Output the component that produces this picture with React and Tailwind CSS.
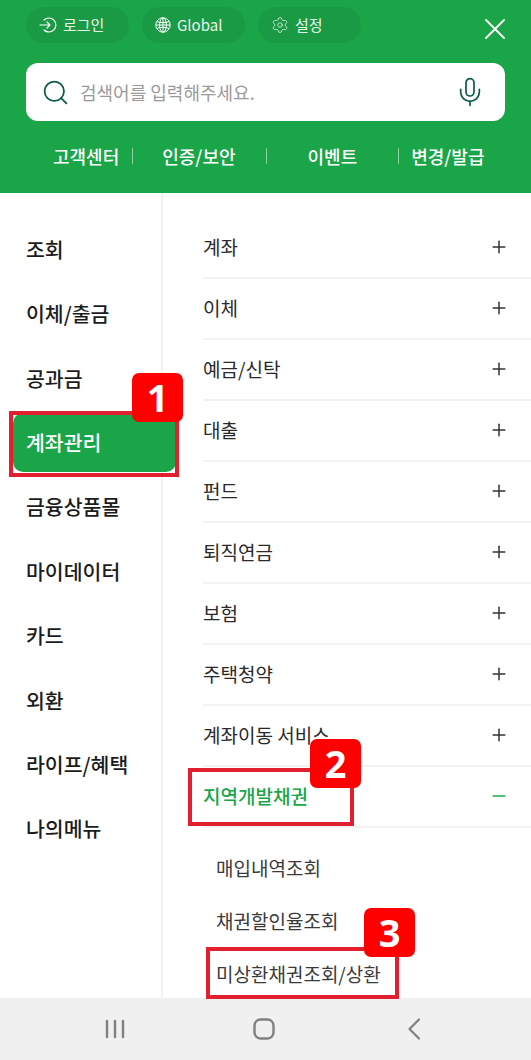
import React from 'react'
import { Plus, Minus, Mic, Search, Settings } from 'lucide-react'

const font = { fontFamily: '"Noto Sans CJK KR", "Noto Sans", sans-serif' }

const sideMenu = ['조회', '이체/출금', '공과금', '계좌관리', '금융상품몰', '마이데이터', '카드', '외환', '라이프/혜택', '나의메뉴']
const mainMenu = ['계좌', '이체', '예금/신탁', '대출', '펀드', '퇴직연금', '보험', '주택청약', '계좌이동 서비스']
const subMenu = ['매입내역조회', '채권할인율조회', '미상환채권조회/상환']

const LoginIcon = () => (
  <svg width="18" height="18" viewBox="0 0 18 18" fill="none" stroke="white" strokeWidth="1.2" strokeLinecap="round" strokeLinejoin="round">
    <path d="M1 9h10M8 6l3 3-3 3" />
    <path d="M5 4a7 7 0 1 1 0 10" />
  </svg>
)

const GlobeIcon = () => (
  <svg width="16" height="16" viewBox="0 0 16 16" fill="none" stroke="white" strokeWidth="1">
    <circle cx="8" cy="8" r="7.2" />
    <ellipse cx="8" cy="8" rx="3.4" ry="7.2" />
    <path d="M8 1v14M2 4.6c3.6 1.4 8.4 1.4 12 0M2 11.4c3.6-1.4 8.4-1.4 12 0M1 8h14" />
  </svg>
)

const Chip = ({ icon, label }) => (
  <div className="flex items-center h-9 w-[103px] pl-[13px] gap-[6px] rounded-full bg-[#1b9a45] text-white/90 text-[15px]">
    {icon}
    <span>{label}</span>
  </div>
)

const Badge = ({ n, className }) => (
  <div className={`absolute flex items-center justify-center w-[51px] h-[49px] rounded-[7px] bg-[#fe0000] text-white text-[38px] font-bold ${className}`} style={{ fontFamily: '"Open Sans", sans-serif' }}>
    {n}
  </div>
)

const Highlight = ({ className }) => (
  <div className={`absolute border-4 border-[#e0202e] ${className}`} />
)

export default function App() {
  return (
    <div className="relative flex flex-col w-[531px] h-[1060px] overflow-hidden bg-white" style={font}>
      <header className="h-[193px] shrink-0 bg-[#1aa548] px-[26px] pt-[7px]">
        <div className="flex items-center gap-[13px]">
          <Chip icon={<LoginIcon />} label="로그인" />
          <Chip icon={<GlobeIcon />} label="Global" />
          <Chip icon={<Settings size={18} strokeWidth={1} />} label="설정" />
          <svg width="20" height="20" viewBox="0 0 20 20" fill="none" stroke="white" strokeWidth="1.8" strokeLinecap="round" className="ml-auto mt-[8px]">
            <path d="M1 1l18 18M19 1L1 19" />
          </svg>
        </div>
        <div className="flex items-center h-[58px] mt-[20px] rounded-[12px] bg-white pl-[15px] pr-[19px]">
          <Search size={29} strokeWidth={1.5} className="text-[#0f5c4a]" />
          <span className="ml-[10px] text-[18px] text-[#9a9a9a]">검색어를 입력해주세요.</span>
          <Mic size={32} strokeWidth={1.3} className="ml-auto text-[#0f5c4a]" />
        </div>
        <div className="flex items-center mt-[19px] text-white text-[18px] font-medium h-[32px]">
          <span className="ml-[27px]">고객센터</span>
          <span className="ml-[13px] w-px h-[16px] bg-white/50" />
          <span className="ml-[29px]">인증/보안</span>
          <span className="ml-[30px] w-px h-[16px] bg-white/50" />
          <span className="ml-[41px]">이벤트</span>
          <span className="ml-[41px] w-px h-[16px] bg-white/50" />
          <span className="ml-[12px]">변경/발급</span>
        </div>
      </header>

      <div className="flex flex-1 min-h-0 overflow-hidden">
        <nav className="w-[163px] shrink-0 border-r-2 border-[#f2f2f2] pt-[24px] pl-[13px]">
          {sideMenu.map((item) => (
            <div key={item} className="h-[64.4px] py-[3px]">
              <div className={`relative flex items-center h-full w-[163px] pl-[13px] text-[20.5px] font-medium rounded-[10px] ${item === '계좌관리' ? 'bg-[#1aa548] text-white' : 'text-[#1c1c1c]'}`}>
                {item}
              </div>
            </div>
          ))}
        </nav>
        <main className="flex-1 pl-[40px] pt-[25px]">
          {mainMenu.map((item) => (
            <div key={item} className="flex items-center justify-between h-[61px] pb-[1px] pr-[22px] border-b-2 border-[#f2f2f2] text-[19px] text-[#2a2a2a]">
              <span>{item}</span>
              <Plus size={20} strokeWidth={1.8} className="text-[#333]" />
            </div>
          ))}
          <div className="flex items-center justify-between h-[61px] pb-[1px] pr-[22px] border-b-2 border-[#f2f2f2] text-[19px] font-medium text-[#1aa548]">
            <span>지역개발채권</span>
            <Minus size={20} strokeWidth={1.8} />
          </div>
          <div className="pl-[13px] pt-[14px]">
            {subMenu.map((item) => (
              <div key={item} className="flex items-center h-[53px] text-[19px] text-[#3a3a3a]">{item}</div>
            ))}
          </div>
        </main>
      </div>

      <footer className="flex items-center shrink-0 h-[62px] bg-[#f0f0f0] pl-[105px]">
        <svg width="20" height="20" viewBox="0 0 20 20" fill="none" stroke="#808080" strokeWidth="2.4" strokeLinecap="round">
          <path d="M2 2v16M10 2v16M18 2v16" />
        </svg>
        <svg width="22" height="22" viewBox="0 0 22 22" fill="none" stroke="#808080" strokeWidth="2.4" className="ml-[128px]">
          <rect x="1.5" y="1.5" width="19" height="19" rx="6" />
        </svg>
        <svg width="12" height="22" viewBox="0 0 12 22" fill="none" stroke="#808080" strokeWidth="2.2" strokeLinecap="round" strokeLinejoin="round" className="ml-[133px]">
          <path d="M11 1.5L1.5 11l9.5 9.5" />
        </svg>
      </footer>

      <Highlight className="left-[9px] top-[411px] w-[170px] h-[66px]" />
      <Badge n="1" className="left-[132px] top-[373px]" />
      <Highlight className="left-[188px] top-[768px] w-[166px] h-[58px]" />
      <Badge n="2" className="left-[310px] top-[739px]" />
      <Highlight className="left-[206px] top-[947px] w-[193px] h-[52px]" />
      <Badge n="3" className="left-[364px] top-[908px]" />
    </div>
  )
}
